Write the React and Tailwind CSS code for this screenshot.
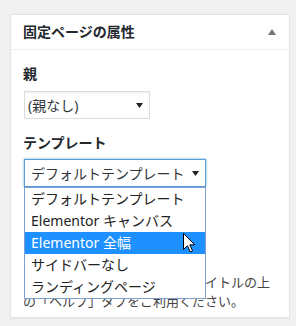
import React from 'react';

const font = { fontFamily: '"Noto Sans", "Noto Sans CJK JP", sans-serif' };

const SelectArrow = () => (
  <svg width="7" height="5" viewBox="0 0 7 5" className="shrink-0">
    <polygon points="0,0 7,0 3.5,5" fill="#222" />
  </svg>
);

const Cursor = () => (
  <svg width="13" height="20" viewBox="0 0 13 20" className="absolute left-[159px] top-[74px]">
    <path
      d="M0.5 0.5 L0.5 16.5 L4.5 12.7 L7.3 19 L9.6 18 L6.8 11.8 L11.8 11.8 Z"
      fill="#fff"
      stroke="#000"
      strokeWidth="1"
      strokeLinejoin="miter"
    />
  </svg>
);

const options = [
  'デフォルトテンプレート',
  'Elementor キャンバス',
  'Elementor 全幅',
  'サイドバーなし',
  'ランディングページ',
];

export default function App() {
  return (
    <div className="w-[296px] h-[326px] bg-[#f1f1f1] pt-[14px] pl-[10px] overflow-hidden" style={font}>
      <div className="w-[280px] bg-white border border-[#e5e5e5] shadow-[0_1px_1px_rgba(0,0,0,0.04)]">
        <div className="h-[35px] border-b border-[#eee] pl-[12px] pr-[13px] flex items-center justify-between">
          <h2 className="text-[14px] font-bold text-[#23282d] leading-[20px]">固定ページの属性</h2>
          <svg width="8" height="6" viewBox="0 0 8 6">
            <polygon points="4,0 8,6 0,6" fill="#72777c" />
          </svg>
        </div>

        <div className="px-[12px] pb-[6px] text-[#23282d]">
          <p className="mt-[14px] h-[20px] leading-[20px] text-[14px] font-semibold">親</p>
          <div className="mt-[7px] ml-[1px] w-[126px] h-[28px] border border-[#ddd] shadow-[inset_0_1px_2px_rgba(0,0,0,0.07)] flex items-center justify-between pl-[3px] pr-[6px] text-[14px] text-[#32373c]">
            <span>(親なし)</span>
            <SelectArrow />
          </div>

          <p className="mt-[14px] h-[20px] leading-[20px] text-[14px] font-semibold">テンプレート</p>
          <div className="relative mt-[6px] ml-[1px] w-[182px]">
            <div className="h-[28px] border border-[#5b9dd9] shadow-[0_0_2px_rgba(30,140,190,0.8)] flex items-center justify-between pl-[6px] pr-[6px] text-[14px] text-[#32373c]">
              <span>デフォルトテンプレート</span>
              <SelectArrow />
            </div>
            <ul className="absolute left-0 top-[28px] w-[182px] z-10 bg-white border border-[#7f9dd0]">
              {options.map((opt, i) => (
                <li
                  key={i}
                  className={
                    i === 2
                      ? 'h-[22px] leading-[22px] pl-[6px] text-[14px] bg-[#1e90ff] text-white'
                      : 'h-[22px] leading-[22px] pl-[6px] text-[14px] text-[#222]'
                  }
                >
                  {opt}
                </li>
              ))}
            </ul>
            <div className="absolute left-0 top-0 z-20 w-0 h-0 overflow-visible">
              <Cursor />
            </div>
          </div>

          {/* order field, covered by the open list */}
          <div className="mt-[14px] h-[20px]" />
          <div className="mt-[6px] ml-[1px] w-[50px] h-[28px] border border-[#ddd]" />

          <p className="mt-[18px] text-[13px] leading-[19px] text-[#444]">
            ヘルプが必要ですか？画面のタイトルの上
            <br />
            の「ヘルプ」タブをご利用ください。
          </p>
        </div>
      </div>
    </div>
  );
}
